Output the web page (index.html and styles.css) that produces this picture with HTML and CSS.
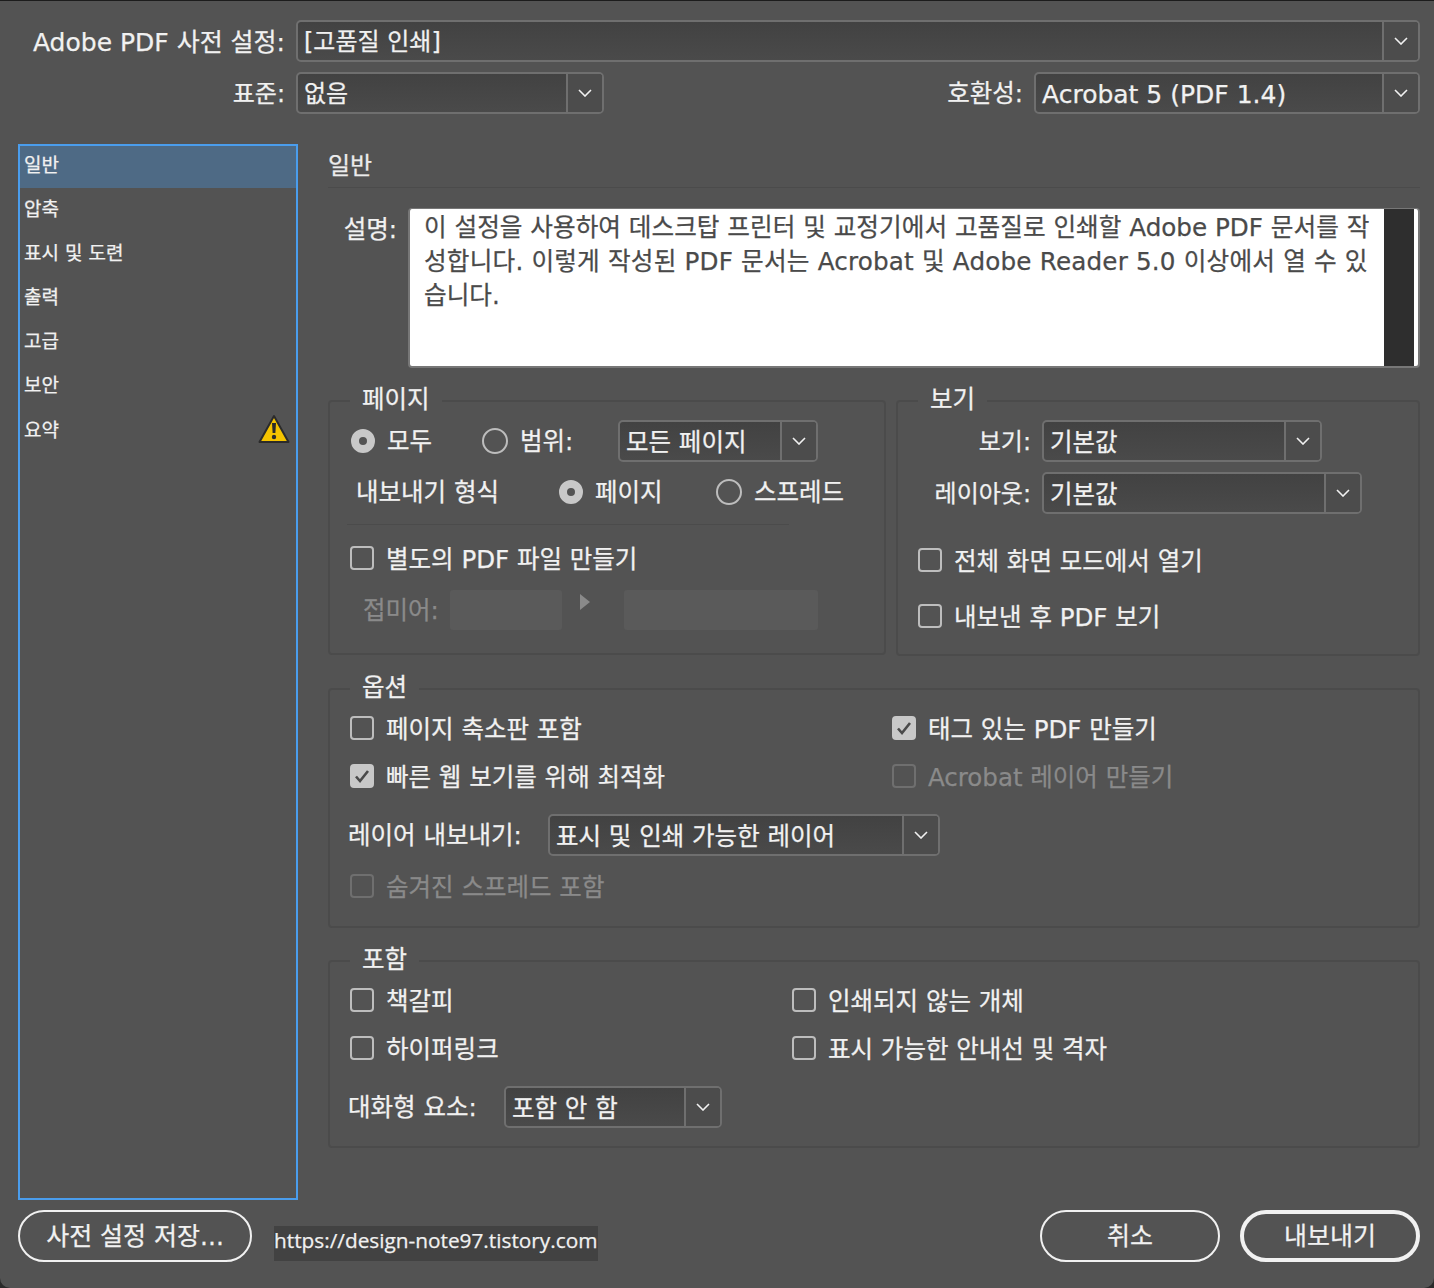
FILE: index.html
```html
<!DOCTYPE html>
<html lang="ko">
<head>
    <meta charset="UTF-8">
    <title>Adobe PDF 내보내기</title>
    <link rel="stylesheet" href="styles.css">
</head>
<body>
<div class="dialog">

    <div class="top-row">
        <label class="top-label">Adobe PDF 사전 설정:</label>
        <div class="select select-fill"><span class="select-text">[고품질 인쇄]</span><span class="select-btn"><svg width="14" height="8" viewBox="0 0 14 8"><path d="M1 1l6 6 6-6"/></svg></span></div>
    </div>
    <div class="top-row second">
        <label class="top-label">표준:</label>
        <div class="select w-std"><span class="select-text">없음</span><span class="select-btn"><svg width="14" height="8" viewBox="0 0 14 8"><path d="M1 1l6 6 6-6"/></svg></span></div>
        <label class="compat-label">호환성:</label>
        <div class="select w-compat"><span class="select-text">Acrobat 5 (PDF 1.4)</span><span class="select-btn"><svg width="14" height="8" viewBox="0 0 14 8"><path d="M1 1l6 6 6-6"/></svg></span></div>
    </div>

    <div class="main">
        <ul class="side">
            <li class="active">일반</li>
            <li>압축</li>
            <li>표시 및 도련</li>
            <li>출력</li>
            <li>고급</li>
            <li>보안</li>
            <li class="warn">요약
                <svg width="32" height="30" viewBox="0 0 32 30"><path d="M16 2L30.500 28H1.500z" fill="#f5c400" stroke="#2b2b2b" stroke-width="2" stroke-linejoin="round"/><path d="M14 9h4l-.6 10h-2.800z" fill="#2b2b2b"/><circle cx="16" cy="23" r="2.200" fill="#2b2b2b"/></svg>
            </li>
        </ul>

        <div class="content">
            <h2 class="section-title">일반</h2>

            <div class="desc-row">
                <label class="desc-label">설명:</label>
                <div class="desc-box">
                    <p class="desc-text">이 설정을 사용하여 데스크탑 프린터 및 교정기에서 고품질로 인쇄할 Adobe PDF 문서를 작<br><span class="desc-wide">성합니다. 이렇게 작성된 PDF 문서는 Acrobat 및 Adobe Reader 5.0 이상에서 열 수 있</span><br>습니다.</p>
                    <div class="desc-scroll"></div>
                </div>
            </div>

            <div class="two-groups">
                <section class="group group-page">
                    <h3 class="group-title">페이지</h3>
                    <div class="row row-range">
                        <span class="radio on"></span><span class="opt w-all">모두</span>
                        <span class="radio"></span><span class="opt w-range">범위:</span>
                        <div class="select small w-pages"><span class="select-text">모든 페이지</span><span class="select-btn"><svg width="14" height="8" viewBox="0 0 14 8"><path d="M1 1l6 6 6-6"/></svg></span></div>
                    </div>
                    <div class="row row-format">
                        <span class="format-label">내보내기 형식</span>
                        <span class="radio on"></span><span class="opt w-page">페이지</span>
                        <span class="radio"></span><span class="opt">스프레드</span>
                    </div>
                    <div class="page-sep"></div>
                    <div class="row row-separate">
                        <span class="check"></span><span class="opt">별도의 PDF 파일 만들기</span>
                    </div>
                    <div class="row row-suffix">
                        <span class="suffix-label">접미어:</span>
                        <span class="suffix-a"></span>
                        <span class="suffix-arrow"></span>
                        <span class="suffix-b"></span>
                    </div>
                </section>

                <section class="group group-view">
                    <h3 class="group-title">보기</h3>
                    <div class="row view-first">
                        <span class="view-label">보기:</span>
                        <div class="select small w-view"><span class="select-text">기본값</span><span class="select-btn"><svg width="14" height="8" viewBox="0 0 14 8"><path d="M1 1l6 6 6-6"/></svg></span></div>
                    </div>
                    <div class="row view-second">
                        <span class="view-label">레이아웃:</span>
                        <div class="select small w-layout"><span class="select-text">기본값</span><span class="select-btn"><svg width="14" height="8" viewBox="0 0 14 8"><path d="M1 1l6 6 6-6"/></svg></span></div>
                    </div>
                    <div class="row view-check-a"><span class="check"></span><span class="opt">전체 화면 모드에서 열기</span></div>
                    <div class="row view-check-b"><span class="check"></span><span class="opt">내보낸 후 PDF 보기</span></div>
                </section>
            </div>

            <section class="group group-options">
                <h3 class="group-title">옵션</h3>
                <div class="check-grid grid-options">
                    <div class="row"><span class="check"></span><span class="opt">페이지 축소판 포함</span></div>
                    <div class="row"><span class="check on"><svg width="16" height="14" viewBox="0 0 16 14"><path d="M2 7.500l4 4.500 8-10"/></svg></span><span class="opt">태그 있는 PDF 만들기</span></div>
                    <div class="row"><span class="check on"><svg width="16" height="14" viewBox="0 0 16 14"><path d="M2 7.500l4 4.500 8-10"/></svg></span><span class="opt">빠른 웹 보기를 위해 최적화</span></div>
                    <div class="row off"><span class="check"></span><span class="opt">Acrobat 레이어 만들기</span></div>
                </div>
                <div class="row row-layers">
                    <span class="row-label w-layers">레이어 내보내기:</span>
                    <div class="select small w-layer-sel"><span class="select-text">표시 및 인쇄 가능한 레이어</span><span class="select-btn"><svg width="14" height="8" viewBox="0 0 14 8"><path d="M1 1l6 6 6-6"/></svg></span></div>
                </div>
                <div class="row row-hidden off"><span class="check"></span><span class="opt">숨겨진 스프레드 포함</span></div>
            </section>

            <section class="group group-include">
                <h3 class="group-title">포함</h3>
                <div class="check-grid grid-include">
                    <div class="row"><span class="check"></span><span class="opt">책갈피</span></div>
                    <div class="row"><span class="check"></span><span class="opt">인쇄되지 않는 개체</span></div>
                    <div class="row"><span class="check"></span><span class="opt">하이퍼링크</span></div>
                    <div class="row"><span class="check"></span><span class="opt">표시 가능한 안내선 및 격자</span></div>
                </div>
                <div class="row row-interactive">
                    <span class="row-label w-interactive">대화형 요소:</span>
                    <div class="select small w-inter-sel"><span class="select-text">포함 안 함</span><span class="select-btn"><svg width="14" height="8" viewBox="0 0 14 8"><path d="M1 1l6 6 6-6"/></svg></span></div>
                </div>
            </section>
        </div>
    </div>

    <div class="bottom">
        <button class="btn btn-save">사전 설정 저장...</button>
        <span class="url-tag">https://design-note97.tistory.com</span>
        <button class="btn btn-cancel">취소</button>
        <button class="btn btn-export">내보내기</button>
    </div>
</div>
</body>
</html>
```

FILE: styles.css
```css
* {
    box-sizing: border-box;
}
html, body {
    margin: 0;
    height: 100%;
    background: #2a2a2a;
}
body {
    font-family: "DejaVu Sans", "Noto Sans CJK KR", sans-serif;
    font-size: 24.5px;
    color: #f1f1f1;
    -webkit-text-stroke: 0.25px;
    overflow: hidden;
}
.dialog {
    width: 1434px;
    height: 1288px;
    background: #535353;
    border-top: 1px solid #1c1c1c;
    border-radius: 0 0 10px 10px;
    padding: 19px 14px 0 18px;
}

/* top rows */
.top-row {
    display: flex;
    align-items: center;
    height: 42px;
}
.top-row.second {
    margin-top: 10px;
}
.top-row .select-text {
    font-size: 24px;
}
.top-row .w-compat .select-text {
    font-size: 25px;
}
.top-label {
    width: 267px;
    text-align: right;
    margin-right: 11px;
    padding-bottom: 3px;
    white-space: nowrap;
    font-size: 25px;
}
.top-row.second .top-label {
    font-size: 24px;
}
.compat-label {
    margin-left: auto;
    margin-right: 11px;
    padding-bottom: 3px;
    white-space: nowrap;
}

/* select */
.select {
    display: flex;
    height: 42px;
    border: 2px solid #6f6f6f;
    border-radius: 5px;
    background: linear-gradient(#424242, #4a4a4a);
    overflow: hidden;
    flex-shrink: 0;
}
.select-fill {
    flex: 1;
}
.select-text {
    flex: 1;
    padding-left: 6px;
    line-height: 41px;
    white-space: nowrap;
}
.select-btn {
    width: 36px;
    border-left: 2px solid #6f6f6f;
    background: #4c4c4c;
    display: flex;
    align-items: center;
    justify-content: center;
}
.select-btn svg path {
    fill: none;
    stroke: #f1f1f1;
    stroke-width: 1.600;
}
.w-std { width: 308px; }
.w-compat { width: 386px; }
.w-pages { width: 200px; }
.w-view { width: 280px; }
.w-layout { width: 320px; }
.w-layer-sel { width: 392px; }
.w-inter-sel { width: 218px; }

/* main area */
.main {
    display: flex;
    margin-top: 30px;
}
.side {
    width: 280px;
    height: 1056px;
    margin: 0;
    padding: 0;
    list-style: none;
    border: 2px solid #4a9ded;
    flex-shrink: 0;
    font-size: 19px;
}
.side li {
    height: 42px;
    margin-bottom: 2px;
    padding: 0 6px 7px 4px;
    display: flex;
    align-items: center;
    justify-content: space-between;
}
.side li.warn {
    padding-bottom: 6px;
}
.side li.warn svg {
    margin-top: 2px;
}
.side li.active {
    background: #4e6a85;
}
.content {
    width: 1092px;
    margin-left: 30px;
}
.section-title {
    margin: 0;
    height: 44px;
    border-bottom: 1px solid #4b4b4b;
    font-size: 24px;
    font-weight: normal;
    line-height: 44px;
    color: #ececec;
}

/* description */
.desc-row {
    display: flex;
    margin-top: 20px;
}
.desc-label {
    width: 69px;
    text-align: right;
    margin-right: 11px;
    line-height: 44px;
}
.desc-box {
    flex: 1;
    height: 160px;
    display: flex;
    background: #fff;
    border: 2px solid #777;
    border-top-width: 1px;
    border-radius: 4px;
    padding-right: 4px;
}
.desc-text {
    flex: 1;
    margin: 0;
    padding: 2px 0 0 14px;
    font-size: 24.65px;
    line-height: 34px;
    color: #4a4a4a;
    white-space: nowrap;
    overflow: hidden;
}
.desc-wide {
    letter-spacing: 0.18px;
}
.desc-scroll {
    width: 30px;
    background: #2e2e2e;
}

/* groups */
.two-groups {
    display: flex;
    gap: 10px;
    margin-top: 32px;
}
.group {
    border: 2px solid #4b4b4b;
    border-radius: 4px;
}
.group-title {
    width: fit-content;
    height: 28px;
    margin: -16px 0 0 20px;
    padding: 0 12px;
    background: #535353;
    font-size: 24.5px;
    font-weight: normal;
    line-height: 28px;
}
.group-page {
    width: 558px;
    height: 255px;
}
.group-view {
    width: 524px;
    height: 256px;
}
.group-options {
    height: 240px;
    margin-top: 32px;
}
.group-include {
    height: 188px;
    margin-top: 32px;
}
.row {
    display: flex;
    align-items: center;
    white-space: nowrap;
}
.opt, .format-label, .suffix-label, .view-label, .row-label {
    padding-bottom: 4px;
}
.opt {
    margin-left: 12px;
}
.check + .opt {
    padding-bottom: 2px;
}
.off {
    color: #8a8a8a;
}

/* radio and checkbox */
.radio {
    width: 26px;
    height: 26px;
    border-radius: 50%;
    border: 2px solid #bdbdbd;
    flex-shrink: 0;
}
.radio.on {
    width: 24px;
    height: 24px;
    border: 8px solid #c8c8c8;
    background: #535353;
}
.check {
    width: 24px;
    height: 24px;
    border: 2px solid #bdbdbd;
    border-radius: 4px;
    flex-shrink: 0;
    display: flex;
    align-items: center;
    justify-content: center;
}
.check.on {
    background: #c8c8c8;
    border-color: #c8c8c8;
}
.check svg path {
    fill: none;
    stroke: #4a4a4a;
    stroke-width: 2.600;
}
.off .check {
    border-color: #6f6f6f;
}

/* page group */
.row-range {
    height: 42px;
    margin: 6px 0 0 21px;
}
.w-all { width: 95px; }
.w-range { width: 98px; }
.row-format {
    height: 42px;
    margin: 9px 0 0 26px;
}
.format-label {
    width: 203px;
}
.w-page { width: 121px; }
.page-sep {
    width: 442px;
    height: 1px;
    margin: 11px 0 0 17px;
    background: #4b4b4b;
}
.row-separate {
    height: 26px;
    margin: 20px 0 0 20px;
}
.row-suffix {
    height: 42px;
    margin: 18px 0 0 33px;
    color: #8a8a8a;
}
.suffix-label {
    width: 87px;
}
.suffix-a, .suffix-b {
    height: 40px;
    background: #5a5a5a;
    border-radius: 3px;
}
.suffix-a { width: 112px; }
.suffix-b { width: 194px; }
.suffix-arrow {
    width: 0;
    height: 0;
    margin: -16px 34px 0 18px;
    border-left: 10px solid #8a8a8a;
    border-top: 8px solid transparent;
    border-bottom: 8px solid transparent;
}

/* view group */
.view-first, .view-second {
    height: 42px;
}
.view-first { margin-top: 6px; }
.view-second { margin-top: 10px; }
.view-label {
    width: 133px;
    margin-right: 11px;
    font-size: 24px;
    text-align: right;
}
.view-check-a, .view-check-b {
    height: 26px;
    margin-left: 20px;
}
.view-check-a { margin-top: 33px; }
.view-check-b { margin-top: 30px; }

/* option and include groups */
.check-grid {
    display: grid;
    margin-left: 20px;
}
.check-grid .row {
    height: 26px;
}
.grid-options {
    grid-template-columns: 542px 1fr;
    row-gap: 22px;
    margin-top: 13px;
}
.grid-include {
    grid-template-columns: 442px 1fr;
    row-gap: 22px;
    margin-top: 13px;
}
.row-layers {
    margin: 25px 0 0 18px;
}
.w-layers { width: 200px; }
.row-hidden {
    height: 26px;
    margin: 17px 0 0 20px;
}
.row-interactive {
    margin: 25px 0 0 18px;
}
.w-interactive { width: 156px; }

/* bottom buttons */
.bottom {
    display: flex;
    align-items: center;
    margin-top: 10px;
    height: 52px;
}
.btn {
    height: 52px;
    background: transparent;
    border: 2px solid #f1f1f1;
    border-radius: 26px;
    color: #f1f1f1;
    font-family: inherit;
    font-size: 25px;
    padding: 0 0 4px;
    -webkit-text-stroke: 0.25px;
}
.btn-save { width: 234px; }
.btn-cancel {
    width: 180px;
    margin-left: auto;
}
.btn-export {
    width: 180px;
    margin-left: 20px;
    border-width: 4px;
}
.url-tag {
    margin: 14px 0 0 22px;
    width: 324px;
    height: 35px;
    background: #424242;
    font-size: 20.8px;
    line-height: 29px;
    white-space: nowrap;
    overflow: hidden;
    font-family: "Open Sans", "Noto Sans CJK KR", sans-serif;
}
```
